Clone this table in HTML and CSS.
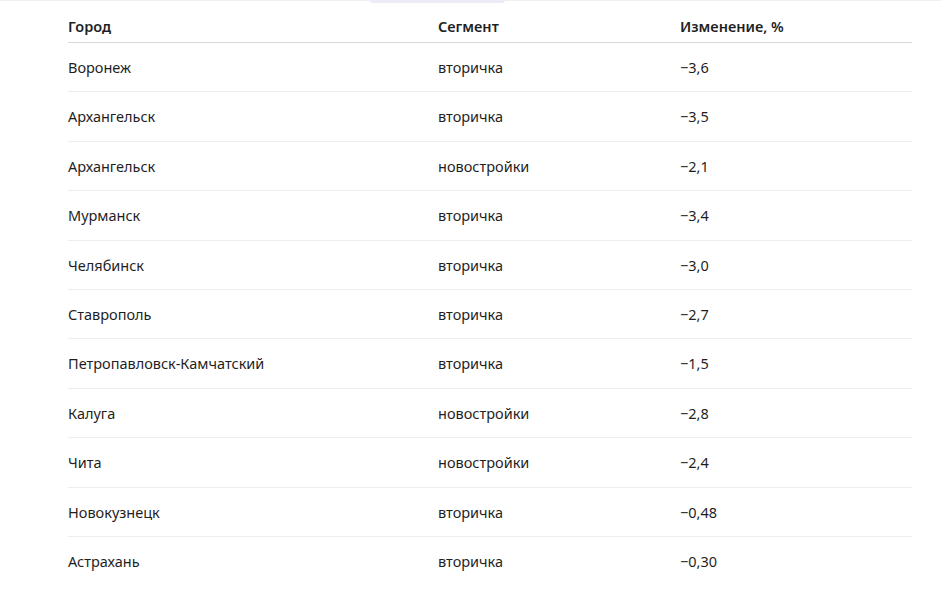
FILE: index.html
```html
<!DOCTYPE html>
<html lang="ru">
<head>
<meta charset="utf-8">
<title>Таблица</title>
<link rel="stylesheet" href="styles.css">
</head>
<body>
<div class="topbar"><span class="tab-indicator"></span></div>
<div class="wrap">
  <table class="data">
    <thead>
      <tr><th class="c-city">Город</th><th class="c-seg">Сегмент</th><th class="c-val">Изменение, %</th></tr>
    </thead>
    <tbody>
      <tr><td>Воронеж</td><td>вторичка</td><td>−3,6</td></tr>
      <tr><td>Архангельск</td><td>вторичка</td><td>−3,5</td></tr>
      <tr><td>Архангельск</td><td>новостройки</td><td>−2,1</td></tr>
      <tr><td>Мурманск</td><td>вторичка</td><td>−3,4</td></tr>
      <tr><td>Челябинск</td><td>вторичка</td><td>−3,0</td></tr>
      <tr><td>Ставрополь</td><td>вторичка</td><td>−2,7</td></tr>
      <tr><td>Петропавловск-Камчатский</td><td>вторичка</td><td>−1,5</td></tr>
      <tr><td>Калуга</td><td>новостройки</td><td>−2,8</td></tr>
      <tr><td>Чита</td><td>новостройки</td><td>−2,4</td></tr>
      <tr><td>Новокузнецк</td><td>вторичка</td><td>−0,48</td></tr>
      <tr><td>Астрахань</td><td>вторичка</td><td>−0,30</td></tr>
    </tbody>
  </table>
</div>
</body>
</html>
```
FILE: styles.css
```css
html, body {
  margin: 0;
  padding: 0;
  background: #ffffff;
}
body {
  font-family: "Noto Sans", "Open Sans", sans-serif;
  font-size: 14.5px;
  color: #1f1f1f;
}
.topbar {
  position: relative;
  height: 1px;
  background: #f0f0f3;
}
.tab-indicator {
  position: absolute;
  left: 370px;
  top: 0;
  width: 135px;
  height: 3px;
  background: #ecebf7;
  border-radius: 0 0 6px 6px;
}
.wrap {
  padding: 0 29px 0 68px;
}
.data {
  width: 844px;
  border-collapse: collapse;
  table-layout: fixed;
}
.data th, .data td {
  text-align: left;
  padding: 0;
}
.c-city { width: 370px; }
.c-seg { width: 242px; }
.data th {
  font-weight: 600;
  line-height: 20px;
  padding-top: 15px;
  padding-bottom: 6px;
  border-bottom: 1px solid #d9d9d9;
}
.data td {
  line-height: 20.4px;
  padding-top: 14px;
  padding-bottom: 14px;
  border-bottom: 1px solid #eeeeee;
}
.data tbody tr:last-child td {
  border-bottom: none;
}
```
